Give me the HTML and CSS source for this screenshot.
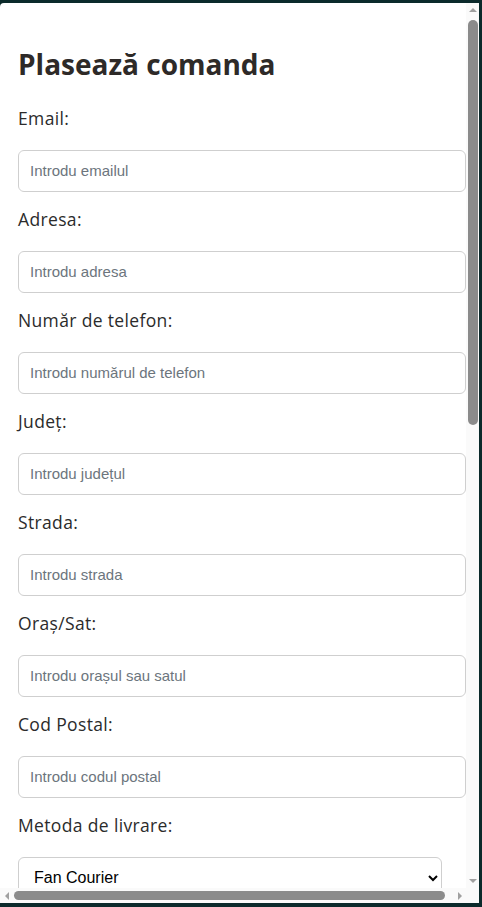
FILE: index.html
```html
<!DOCTYPE html>
<html lang="ro">
<head>
<meta charset="utf-8">
<title>Plasează comanda</title>
<link rel="stylesheet" href="styles.css">
</head>
<body>
<div class="modal">
  <div class="viewport">
    <form class="order-form">
      <h2 class="title">Plasează comanda</h2>

      <label class="label" for="email">Email:</label>
      <input class="field" id="email" type="email" placeholder="Introdu emailul">

      <label class="label" for="adresa">Adresa:</label>
      <input class="field" id="adresa" type="text" placeholder="Introdu adresa">

      <label class="label" for="tel">Număr de telefon:</label>
      <input class="field" id="tel" type="tel" placeholder="Introdu numărul de telefon">

      <label class="label" for="judet">Județ:</label>
      <input class="field" id="judet" type="text" placeholder="Introdu județul">

      <label class="label" for="strada">Strada:</label>
      <input class="field" id="strada" type="text" placeholder="Introdu strada">

      <label class="label" for="oras">Oraș/Sat:</label>
      <input class="field" id="oras" type="text" placeholder="Introdu orașul sau satul">

      <label class="label" for="cod">Cod Postal:</label>
      <input class="field" id="cod" type="text" placeholder="Introdu codul postal">

      <label class="label" for="livrare">Metoda de livrare:</label>
      <select class="select" id="livrare">
        <option>Fan Courier</option>
        <option>Sameday</option>
        <option>Poșta Română</option>
      </select>
    </form>
  </div>

  <div class="vbar" aria-hidden="true">
    <span class="arrow-box"><span class="tri tri-up"></span></span>
    <span class="vtrack"><span class="vthumb"></span></span>
    <span class="arrow-box"><span class="tri tri-down"></span></span>
  </div>

  <div class="hbar" aria-hidden="true">
    <span class="arrow-box h"><span class="tri tri-left"></span></span>
    <span class="htrack"><span class="hthumb"></span></span>
    <span class="arrow-box h"><span class="tri tri-right"></span></span>
  </div>

  <div class="corner" aria-hidden="true"></div>
</div>
</body>
</html>
```

FILE: styles.css
```css
html, body {
  margin: 0;
  padding: 0;
}

body {
  background: #0b2a2b;
  width: 482px;
  height: 907px;
  overflow: hidden;
}

.modal {
  margin-top: 3px;
  width: 479px;
  height: 900px;
  background: #ffffff;
  border-top-left-radius: 4px;
  overflow: hidden;
  display: grid;
  grid-template-columns: 466px 13px;
  grid-template-rows: 885px 15px;
}

.viewport {
  overflow: hidden;
}

/* vertical scrollbar */
.vbar {
  display: flex;
  flex-direction: column;
  background: #fafafa;
}

.arrow-box {
  display: flex;
  align-items: center;
  justify-content: center;
  height: 14px;
  flex: none;
}

.arrow-box.h {
  width: 13px;
  height: auto;
}

.vtrack {
  flex: 1;
  display: flex;
  flex-direction: column;
  align-items: center;
  padding-top: 3px;
}

.vthumb {
  width: 10px;
  height: 405px;
  border-radius: 5px;
  background: #8b8b8b;
}

/* horizontal scrollbar */
.hbar {
  display: flex;
  background: #fafafa;
}

.htrack {
  flex: 1;
  display: flex;
  align-items: center;
  padding-left: 1px;
  padding-right: 8px;
}

.hthumb {
  flex: 1;
  height: 9px;
  border-radius: 5px;
  background: #8b8b8b;
}

.corner {
  background: #fafafa;
}

.tri {
  width: 0;
  height: 0;
  display: block;
}

.tri-up {
  border-left: 4px solid transparent;
  border-right: 4px solid transparent;
  border-bottom: 4px solid #a0a0a0;
}

.tri-down {
  border-left: 4px solid transparent;
  border-right: 4px solid transparent;
  border-top: 4px solid #a0a0a0;
}

.tri-left {
  border-top: 4px solid transparent;
  border-bottom: 4px solid transparent;
  border-right: 4px solid #a0a0a0;
}

.tri-right {
  border-top: 4px solid transparent;
  border-bottom: 4px solid transparent;
  border-left: 4px solid #a0a0a0;
}

/* form */
.order-form {
  display: flex;
  flex-direction: column;
  align-items: flex-start;
  width: 424px;
  padding: 45px 18px 0;
  font-family: "Open Sans", "DejaVu Sans", sans-serif;
  color: #2b2b2b;
}

.title {
  margin: 0 0 23px;
  font-size: 28px;
  line-height: 1.2;
  font-weight: 700;
  color: #2e2a28;
}

.label {
  display: block;
  font-size: 17.5px;
  letter-spacing: 0.35px;
  line-height: 27px;
  margin-bottom: 18px;
  color: #2b2b2b;
}

.field {
  display: block;
  width: 100%;
  height: 18px;
  padding: 11px 11px;
  margin: 0 0 14px;
  border: 1px solid #cfcfcf;
  border-radius: 6px;
  font-family: "Liberation Sans", Arial, sans-serif;
  font-size: 15px;
  color: #212529;
  background: #fff;
}

.field::placeholder {
  color: #6c757d;
}

.select {
  display: block;
  flex: none;
  width: 100%;
  height: 42px;
  padding: 0 10px 0 11px;
  margin: 0;
  border: 1px solid #cfcfcf;
  border-radius: 6px;
  font-family: "Liberation Sans", Arial, sans-serif;
  font-size: 16px;
  color: #000;
  background: #fff;
}
```
